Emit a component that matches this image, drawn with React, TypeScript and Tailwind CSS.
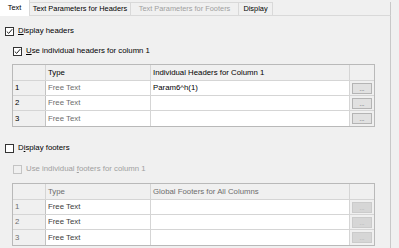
import React from "react";

const font = { fontFamily: '"Liberation Sans", Arial, sans-serif' };

function Check({ checked, disabled }: { checked?: boolean; disabled?: boolean }) {
  return (
    <div
      className={
        "w-[9px] h-[9px] border flex items-center justify-center shrink-0 " +
        (disabled ? "border-[#c4c4c4] bg-[#f0f0f0]" : "border-[#333333] bg-white")
      }
    >
      {checked && (
        <svg width="7" height="7" viewBox="0 0 7 7">
          <path d="M0.8 3.6 L2.7 5.4 L6.2 1.2" fill="none" stroke="#222" strokeWidth="1" />
        </svg>
      )}
    </div>
  );
}

function Btn({ disabled }: { disabled?: boolean }) {
  return (
    <div
      className={
        "w-[20px] h-[11px] border flex items-end justify-center leading-none pb-[1px] " +
        (disabled ? "bg-[#d6d6d6] border-[#cbcbcb] text-[#a8a8a8]" : "bg-[#e1e1e1] border-[#b4b4b4] text-[#333]")
      }
    >
      <span className="text-[6px] tracking-[0px]">...</span>
    </div>
  );
}

function Table({
  header,
  values,
  disabled,
}: {
  header: string;
  values: string[];
  disabled?: boolean;
}) {
  const headColor = disabled ? "text-[#6d6d6d]" : "text-black";
  const numColor = disabled ? "text-[#6d6d6d]" : "text-black";
  const typeColor = disabled ? "text-[#3c3c3c]" : "text-[#6d6d6d]";
  return (
    <div className="ml-[12px] w-[363px] border border-[#b9b9b9] bg-white flex flex-col">
      <div className="flex h-[16px] border-b border-[#d5d5d5] bg-[#f0f0f0]">
        <div className="w-[33px] border-r border-[#d5d5d5]" />
        <div className={"w-[105px] border-r border-[#d5d5d5] pl-[2px] flex items-center " + headColor}>Type</div>
        <div className={"w-[199px] border-r border-[#d5d5d5] pl-[2px] flex items-center " + headColor}>{header}</div>
        <div className="flex-1" />
      </div>
      {[1, 2, 3].map((n, i) => (
        <div key={n} className={"flex h-[15px] " + (i < 2 ? "border-b border-[#d5d5d5]" : "")}>
          <div className={"w-[33px] border-r border-[#c2c2c2] bg-[#f0f0f0] pl-[2px] flex items-center " + numColor}>
            {n}
          </div>
          <div className={"w-[105px] border-r border-[#d5d5d5] pl-[2px] flex items-center " + typeColor}>
            Free Text
          </div>
          <div className="w-[199px] border-r border-[#d5d5d5] pl-[2px] flex items-center text-black">
            {values[i]}
          </div>
          <div className="flex-1 bg-[#f0f0f0] flex items-center pl-[2px]">
            <Btn disabled={disabled} />
          </div>
        </div>
      ))}
    </div>
  );
}

export default function App() {
  return (
    <div className="w-[399px] h-[248px] bg-[#f0f0f0] overflow-hidden flex flex-col text-[7.8px] text-black" style={font}>
      <div className="flex h-[16px] w-[391px] text-[7.4px]">
        <div className="w-[30px] h-[16px] bg-white border-r border-[#d9d9d9] flex items-center justify-center">
          Text
        </div>
        <div className="w-[101px] h-[14px] mt-[2px] border-t border-r border-b border-[#d9d9d9] flex items-center justify-center">
          Text Parameters for Headers
        </div>
        <div className="w-[108px] h-[14px] mt-[2px] border-t border-r border-b border-[#d9d9d9] flex items-center justify-center text-[#a0a0a0]">
          Text Parameters for Footers
        </div>
        <div className="w-[34px] h-[14px] mt-[2px] border-t border-r border-b border-[#d9d9d9] flex items-center justify-center">
          Display
        </div>
        <div className="flex-1 h-[14px] mt-[2px] border-b border-r border-[#d9d9d9] border-r-[#c8c8c8] relative top-0" style={{ borderTop: "none" }} />
      </div>
      <div className="w-[391px] flex-1 border-r border-[#c8c8c8] flex flex-col">
        <div className="flex items-center h-[12px] mt-[9px] ml-[5px] gap-[4px]">
          <Check checked />
          <span>
            <span className="underline">D</span>isplay headers
          </span>
        </div>
        <div className="flex items-center h-[12px] mt-[8px] ml-[13px] gap-[4px]">
          <Check checked />
          <span>
            <span className="underline">U</span>se individual headers for column 1
          </span>
        </div>
        <div className="mt-[7px]">
          <Table header="Individual Headers for Column 1" values={["Param6^h(1)", "", ""]} />
        </div>
        <div className="flex items-center h-[12px] mt-[15px] ml-[5px] gap-[4px]">
          <Check />
          <span>
            D<span className="underline">i</span>splay footers
          </span>
        </div>
        <div className="flex items-center h-[12px] mt-[9px] ml-[13px] gap-[4px] text-[#a0a0a0]">
          <Check disabled />
          <span>
            Use individual <span className="underline">f</span>ooters for column 1
          </span>
        </div>
        <div className="mt-[8px]">
          <Table header="Global Footers for All Columns" values={["", "", ""]} disabled />
        </div>
      </div>
    </div>
  );
}
